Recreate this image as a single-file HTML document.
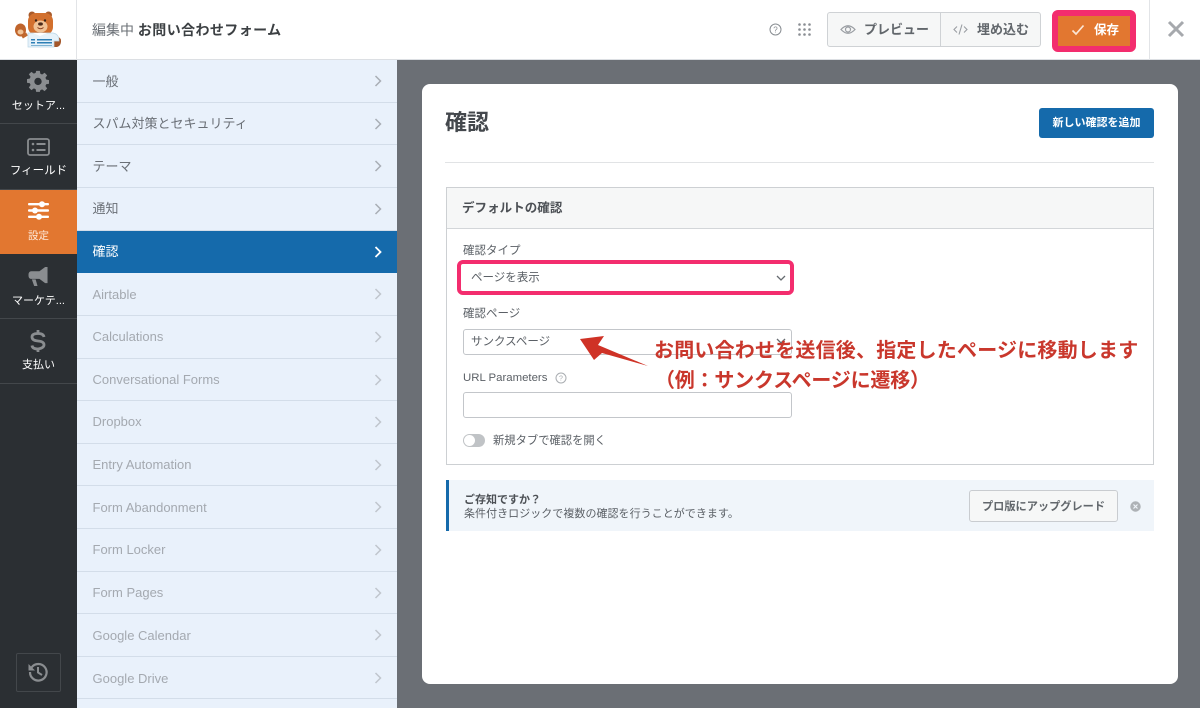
<!DOCTYPE html>
<html lang="ja"><head><meta charset="utf-8"><title>確認</title>
<style>
*{box-sizing:border-box}
html,body{margin:0;padding:0}
body{width:1200px;height:708px;overflow:hidden;position:relative;background:#6b6f75;font-family:"Liberation Sans","Noto Sans CJK JP",sans-serif;color:#50575e}
.a{position:absolute;white-space:nowrap}
svg{position:absolute;display:block}
.row{position:absolute;left:77px;width:320px;background:#e9f1fb;border-bottom:1px solid #d3dde9;font-size:13px;padding-left:15.5px;color:#6a6f76}
.row.dis{color:#a4a9b0}
.row.act{background:#156aab;color:#fff;border-bottom:none}
.row svg{left:297px;top:50%;margin-top:-6px}
.nav{position:absolute;left:0;width:77px;background:#2b2f33;border-bottom:1px solid #43474b;color:#fff;font-size:11px;text-align:center}
.nav span{position:absolute;left:0;right:0;white-space:nowrap}
.inp{position:absolute;background:#fff;border:1px solid #c3c6ca;border-radius:3px}
</style></head><body>

<!-- top bar -->
<div class="a" style="left:0;top:0;width:1200px;height:60px;background:#fff;border-bottom:1px solid #dcdfe3"></div>
<div class="a" style="left:76px;top:0;width:1px;height:60px;background:#e2e4e7"></div>
<div class="a" style="left:1149px;top:0;width:1px;height:60px;background:#e2e4e7"></div>

<!-- logo -->
<svg style="left:0;top:0" width="76" height="59" viewBox="0 0 76 59">
<path d="M54 37h4q3.500 1 3 5t-4 5h-3z" fill="#a4572a"/>
<circle cx="32" cy="15" r="3.500" fill="#a85a2a"/><circle cx="48.500" cy="15" r="3.500" fill="#a85a2a"/>
<rect x="28" y="13" width="25" height="22" rx="8" fill="#d2702e"/>
<ellipse cx="40.500" cy="26.500" rx="7" ry="6" fill="#f0c295"/>
<circle cx="36" cy="20.500" r="1.200" fill="#3a2418"/><circle cx="45" cy="20.500" r="1.200" fill="#3a2418"/>
<ellipse cx="40.500" cy="24" rx="2.400" ry="1.600" fill="#4a2a1a"/>
<path d="M37.500 27.500q3 2.500 6 0" stroke="#8a3f1e" stroke-width="1" fill="none"/>
<path d="M27 34l-5 3" stroke="#c0682e" stroke-width="3.500"/>
<ellipse cx="20.500" cy="30" rx="5.500" ry="6.500" fill="#c0652c"/>
<ellipse cx="20.500" cy="32" rx="3" ry="2.500" fill="#f0c295"/>
<circle cx="17.500" cy="26" r="1.100" fill="#c0652c"/><circle cx="20.500" cy="25" r="1.100" fill="#c0652c"/><circle cx="23.500" cy="26" r="1.100" fill="#c0652c"/>
<path d="M28 33h25q6 1 6 8h-5v6H28z" fill="#e6f2fa" stroke="#bcd7e7" stroke-width=".7"/>
<path d="M33 33l7 3 7-3z" fill="#fff"/>
<rect x="31" y="39" width="4" height="1.500" fill="#2d7fb5"/><rect x="37" y="39" width="15" height="1.500" fill="#2d7fb5"/>
<rect x="31" y="42" width="4" height="1.500" fill="#2d7fb5"/><rect x="37" y="42" width="15" height="1.500" fill="#2d7fb5"/>
<rect x="31" y="45" width="21" height="1" fill="#7fb3d3"/>
</svg>

<div class="a" style="left:92px;top:20px;font-size:14px;line-height:20px;color:#6b7076">編集中 <b style="color:#3c4043;letter-spacing:.4px">お問い合わせフォーム</b></div>

<!-- help -->
<svg style="left:769px;top:23px" width="13" height="13" viewBox="0 0 13 13"><circle cx="6.500" cy="6.500" r="5.500" fill="none" stroke="#888d92"/><text x="6.500" y="9.500" font-size="8" text-anchor="middle" fill="#888d92" font-family="Liberation Sans">?</text></svg>
<svg style="left:798px;top:23px" width="13" height="13" viewBox="0 0 13 13" fill="#8a8e93"><circle cx="1.500" cy="1.500" r="1.300"/><circle cx="6.500" cy="1.500" r="1.300"/><circle cx="11.500" cy="1.500" r="1.300"/><circle cx="1.500" cy="6.500" r="1.300"/><circle cx="6.500" cy="6.500" r="1.300"/><circle cx="11.500" cy="6.500" r="1.300"/><circle cx="1.500" cy="11.500" r="1.300"/><circle cx="6.500" cy="11.500" r="1.300"/><circle cx="11.500" cy="11.500" r="1.300"/></svg>

<!-- preview/embed -->
<div class="a" style="left:827px;top:12px;width:214px;height:35px;background:#f6f7f7;border:1px solid #cfd2d5;border-radius:3px"></div>
<div class="a" style="left:940px;top:13px;width:1px;height:33px;background:#cfd2d5"></div>
<svg style="left:840px;top:23px" width="16" height="13" viewBox="0 0 16 13"><path d="M1 6.500Q8-1 15 6.500 8 14 1 6.500z" fill="none" stroke="#9a9ea3" stroke-width="1.200"/><circle cx="8" cy="6.500" r="2.500" fill="none" stroke="#9a9ea3" stroke-width="1.200"/></svg>
<div class="a" style="left:864px;top:21px;font-size:13px;line-height:18px;font-weight:700;color:#62676c">プレビュー</div>
<svg style="left:953px;top:23px" width="15" height="13" viewBox="0 0 15 13"><path d="M4 3.500 1 6.500l3 3M11 3.500l3 3-3 3M9 1.500l-3 10" fill="none" stroke="#9a9ea3" stroke-width="1.100"/></svg>
<div class="a" style="left:977px;top:21px;font-size:13px;line-height:18px;font-weight:700;color:#62676c">埋め込む</div>

<!-- save -->
<div class="a" style="left:1052px;top:10px;width:84px;height:42px;background:#e27730;border:6px solid #f32d6e;border-radius:6px"></div>
<svg style="left:1071px;top:24px" width="14" height="12" viewBox="0 0 14 12"><path d="M1.500 6.500 5 10l7.500-8.500" fill="none" stroke="#fbe6d6" stroke-width="1.700"/></svg>
<div class="a" style="left:1094px;top:21px;font-size:12.500px;line-height:18px;font-weight:700;color:#fff">保存</div>

<!-- close -->
<svg style="left:1167px;top:20px" width="18" height="18" viewBox="0 0 18 18"><path d="M2 2l14 14M16 2 2 16" stroke="#a6a9ad" stroke-width="3"/></svg>

<!-- left nav -->
<div class="a" style="left:0;top:60px;width:77px;height:648px;background:#2b2f33"></div>
<div class="nav" style="top:60px;height:64px"><span style="top:38px;line-height:16px">セットア...</span>
<svg style="left:27px;top:10px" width="22" height="22" viewBox="0 0 24 24"><path fill="#8a8d90" fill-rule="evenodd" d="M10 1h4l.6 3.100 1.900.8L19.200 3l2.800 2.800-1.900 2.700.8 1.900 3.100.6v4l-3.100.6-.8 1.900 1.900 2.700-2.800 2.800-2.700-1.900-1.900.8L14 23.900h-4l-.6-3.100-1.900-.8L4.800 21.900 2 19.100l1.900-2.700-.8-1.900L0 13.900v-4l3.100-.6.8-1.900L2 4.700 4.800 2l2.700 1.900 1.900-.8zM12 8.500a4 4 0 1 0 0 8 4 4 0 0 0 0-8z"/></svg></div>
<div class="nav" style="top:124px;height:66px"><span style="top:39px;line-height:16px;font-size:11.500px">フィールド</span>
<svg style="left:27px;top:14px" width="23" height="18" viewBox="0 0 23 18"><rect x="1" y="1" width="21" height="16" rx="2" fill="none" stroke="#8a8d90" stroke-width="1.800"/><circle cx="6" cy="6" r="1.300" fill="#8a8d90"/><circle cx="6" cy="12" r="1.300" fill="#8a8d90"/><rect x="9.500" y="5" width="9" height="2" fill="#8a8d90"/><rect x="9.500" y="11" width="9" height="2" fill="#8a8d90"/></svg></div>
<div class="nav" style="top:190px;height:64px;background:#e27730;border-bottom:none"><span style="top:38px;line-height:16px;font-size:10.500px;color:#fde9da">設定</span>
<svg style="left:28px;top:11px" width="21" height="19" viewBox="0 0 21 19" fill="#fff"><rect y="2" width="21" height="2.400" rx="1"/><rect y="8.300" width="21" height="2.400" rx="1"/><rect y="14.600" width="21" height="2.400" rx="1"/><circle cx="14" cy="3.200" r="3"/><circle cx="7" cy="9.500" r="3"/><circle cx="11" cy="15.800" r="3"/></svg></div>
<div class="nav" style="top:254px;height:65px"><span style="top:39px;line-height:16px">マーケテ...</span>
<svg style="left:28px;top:12px" width="20" height="21" viewBox="0 0 21 22" fill="#8a8d90"><path d="M18 1h2.500v17H18L12 13.500H3.500Q.5 13.500.5 9.500t3-4H12z"/><path d="M4 14h4l2 7H6.500z"/></svg></div>
<div class="nav" style="top:319px;height:65px"><span style="top:38px;line-height:16px">支払い</span>
<svg style="left:30px;top:10px" width="16" height="24" viewBox="0 0 16 24"><path d="M14 8Q13.500 4.500 8 4.500 2 4.500 2 8t6 4 6 3.800-6 4.200Q2.500 20 2 16.500M8 1v3.500M8 20v3" fill="none" stroke="#8a8d90" stroke-width="2.800"/></svg></div>
<div class="a" style="left:16px;top:653px;width:45px;height:39px;border:1px solid #43474b;border-radius:2px"></div>
<svg style="left:27px;top:661px" width="22" height="22" viewBox="0 0 22 22"><path d="M4.500 6.500A8.300 8.300 0 1 1 3 11" fill="none" stroke="#8a8d90" stroke-width="2.200"/><path d="M1.500 3v6.500H8z" fill="#8a8d90"/><path d="M11 6v5.500l4 2.500" fill="none" stroke="#8a8d90" stroke-width="2"/></svg>

<!-- settings list -->
<div class="row" style="top:60px;height:43px;line-height:44px">一般<svg width="8" height="12" viewBox="0 0 8 12"><path d="M1.500 1l5 5-5 5" fill="none" stroke="#a9aeb5" stroke-width="1.500"/></svg></div>
<div class="row" style="top:103px;height:42px;line-height:42px">スパム対策とセキュリティ<svg width="8" height="12" viewBox="0 0 8 12"><path d="M1.500 1l5 5-5 5" fill="none" stroke="#a9aeb5" stroke-width="1.500"/></svg></div>
<div class="row" style="top:145px;height:43px;line-height:43px">テーマ<svg width="8" height="12" viewBox="0 0 8 12"><path d="M1.500 1l5 5-5 5" fill="none" stroke="#a9aeb5" stroke-width="1.500"/></svg></div>
<div class="row" style="top:188px;height:43px;line-height:42px">通知<svg width="8" height="12" viewBox="0 0 8 12"><path d="M1.500 1l5 5-5 5" fill="none" stroke="#a9aeb5" stroke-width="1.500"/></svg></div>
<div class="row act" style="top:231px;height:42px;line-height:42px">確認<svg width="8" height="12" viewBox="0 0 8 12"><path d="M1.500 1l5 5-5 5" fill="none" stroke="#fff" stroke-width="1.800"/></svg></div>
<div class="row dis" style="top:273px;height:43px;line-height:44px">Airtable<svg width="8" height="12" viewBox="0 0 8 12"><path d="M1.500 1l5 5-5 5" fill="none" stroke="#c0c6cd" stroke-width="1.500"/></svg></div>
<div class="row dis" style="top:316px;height:43px;line-height:42px">Calculations<svg width="8" height="12" viewBox="0 0 8 12"><path d="M1.500 1l5 5-5 5" fill="none" stroke="#c0c6cd" stroke-width="1.500"/></svg></div>
<div class="row dis" style="top:359px;height:42px;line-height:42px">Conversational Forms<svg width="8" height="12" viewBox="0 0 8 12"><path d="M1.500 1l5 5-5 5" fill="none" stroke="#c0c6cd" stroke-width="1.500"/></svg></div>
<div class="row dis" style="top:401px;height:43px;line-height:42px">Dropbox<svg width="8" height="12" viewBox="0 0 8 12"><path d="M1.500 1l5 5-5 5" fill="none" stroke="#c0c6cd" stroke-width="1.500"/></svg></div>
<div class="row dis" style="top:444px;height:42px;line-height:42px">Entry Automation<svg width="8" height="12" viewBox="0 0 8 12"><path d="M1.500 1l5 5-5 5" fill="none" stroke="#c0c6cd" stroke-width="1.500"/></svg></div>
<div class="row dis" style="top:486px;height:43px;line-height:43px">Form Abandonment<svg width="8" height="12" viewBox="0 0 8 12"><path d="M1.500 1l5 5-5 5" fill="none" stroke="#c0c6cd" stroke-width="1.500"/></svg></div>
<div class="row dis" style="top:529px;height:43px;line-height:42px">Form Locker<svg width="8" height="12" viewBox="0 0 8 12"><path d="M1.500 1l5 5-5 5" fill="none" stroke="#c0c6cd" stroke-width="1.500"/></svg></div>
<div class="row dis" style="top:572px;height:42px;line-height:42px">Form Pages<svg width="8" height="12" viewBox="0 0 8 12"><path d="M1.500 1l5 5-5 5" fill="none" stroke="#c0c6cd" stroke-width="1.500"/></svg></div>
<div class="row dis" style="top:614px;height:43px;line-height:43px">Google Calendar<svg width="8" height="12" viewBox="0 0 8 12"><path d="M1.500 1l5 5-5 5" fill="none" stroke="#c0c6cd" stroke-width="1.500"/></svg></div>
<div class="row dis" style="top:657px;height:42px;line-height:43px">Google Drive<svg width="8" height="12" viewBox="0 0 8 12"><path d="M1.500 1l5 5-5 5" fill="none" stroke="#c0c6cd" stroke-width="1.500"/></svg></div>
<div class="row dis" style="top:699px;height:9px;border:none"></div>

<!-- main card -->
<div class="a" style="left:422px;top:84px;width:756px;height:600px;background:#fff;border-radius:8px"></div>
<div class="a" style="left:445px;top:108px;font-size:22px;line-height:30px;font-weight:700;color:#44484d">確認</div>
<div class="a" style="left:1039px;top:108px;width:115px;height:30px;background:#156aab;border-radius:3px;color:#fff;font-size:11px;font-weight:700;line-height:31px;text-align:center">新しい確認を追加</div>
<div class="a" style="left:445px;top:162px;width:709px;height:1px;background:#e1e3e5"></div>

<!-- panel -->
<div class="a" style="left:446px;top:187px;width:708px;height:278px;border:1px solid #cdd0d3;background:#fff"></div>
<div class="a" style="left:447px;top:188px;width:706px;height:41px;background:#f6f7f7;border-bottom:1px solid #d3d6d9"></div>
<div class="a" style="left:462px;top:199px;font-size:12.500px;line-height:18px;font-weight:700;color:#4c5055;letter-spacing:.05px">デフォルトの確認</div>

<div class="a" style="left:463px;top:243px;font-size:11.500px;line-height:16px;color:#5b6066">確認タイプ</div>
<div class="a" style="left:457px;top:260px;width:337px;height:35px;background:#fff;border:4px solid #f32d6e;border-radius:6px"></div>
<div class="a" style="left:471px;top:270px;font-size:11.500px;line-height:16px;color:#5b6066">ページを表示</div>
<svg style="left:776px;top:275px" width="10" height="7" viewBox="0 0 10 7"><path d="M1 1l4 4 4-4" fill="none" stroke="#666b70" stroke-width="1.300"/></svg>

<div class="a" style="left:463px;top:306px;font-size:11.500px;line-height:16px;color:#5b6066">確認ページ</div>
<div class="inp" style="left:463px;top:329px;width:329px;height:26px"></div>
<div class="a" style="left:471px;top:334px;font-size:11.500px;line-height:16px;color:#5b6066">サンクスページ</div>
<svg style="left:776px;top:338px" width="10" height="7" viewBox="0 0 10 7"><path d="M1 1l4 4 4-4" fill="none" stroke="#666b70" stroke-width="1.300"/></svg>

<div class="a" style="left:463px;top:370px;font-size:11.400px;line-height:16px;color:#5b6066">URL Parameters</div>
<svg style="left:555px;top:372px" width="12" height="12" viewBox="0 0 12 12"><circle cx="6" cy="6" r="5" fill="none" stroke="#a9adb1"/><text x="6" y="8.500" font-size="7" text-anchor="middle" fill="#a9adb1" font-family="Liberation Sans">?</text></svg>
<div class="inp" style="left:463px;top:392px;width:329px;height:26px"></div>

<div class="a" style="left:463px;top:434px;width:22px;height:13px;background:#c0c3c6;border-radius:7px"></div>
<div class="a" style="left:464px;top:435px;width:11px;height:11px;background:#fff;border-radius:50%"></div>
<div class="a" style="left:493px;top:433px;font-size:11.300px;line-height:16px;color:#5b6066">新規タブで確認を開く</div>

<!-- notice -->
<div class="a" style="left:446px;top:480px;width:708px;height:51px;background:#f0f5fa;border-left:3px solid #156aab"></div>
<div class="a" style="left:464px;top:493px;font-size:11px;line-height:14px;font-weight:700;color:#4c5055">ご存知ですか？</div>
<div class="a" style="left:464px;top:507px;font-size:11px;line-height:15px;color:#5b6066;letter-spacing:.04px">条件付きロジックで複数の確認を行うことができます。</div>
<div class="a" style="left:969px;top:490px;width:149px;height:32px;background:#f6f7f7;border:1px solid #c9ccd0;border-radius:3px;font-size:11.200px;font-weight:700;line-height:32px;text-align:center;color:#62676c">プロ版にアップグレード</div>
<svg style="left:1130px;top:501px" width="11" height="11" viewBox="0 0 11 11"><circle cx="5.500" cy="5.500" r="5.200" fill="#aeb2b6"/><path d="M3.500 3.500l4 4M7.500 3.500l-4 4" stroke="#f0f5fa" stroke-width="1.200"/></svg>

<!-- annotation -->
<svg style="left:578px;top:334px" width="74" height="34" viewBox="0 0 74 34"><path d="M2 5 26 2 20 11 70 32 24 19 16 26z" fill="#cf3226"/></svg>
<div class="a" style="left:654px;top:338px;font-size:20px;line-height:26px;font-weight:700;color:#c9372c;letter-spacing:.2px">お問い合わせを送信後、指定したページに移動します</div>
<div class="a" style="left:655px;top:368px;font-size:20px;line-height:26px;font-weight:700;color:#c9372c;letter-spacing:-.2px">（例：サンクスページに遷移）</div>

</body></html>
